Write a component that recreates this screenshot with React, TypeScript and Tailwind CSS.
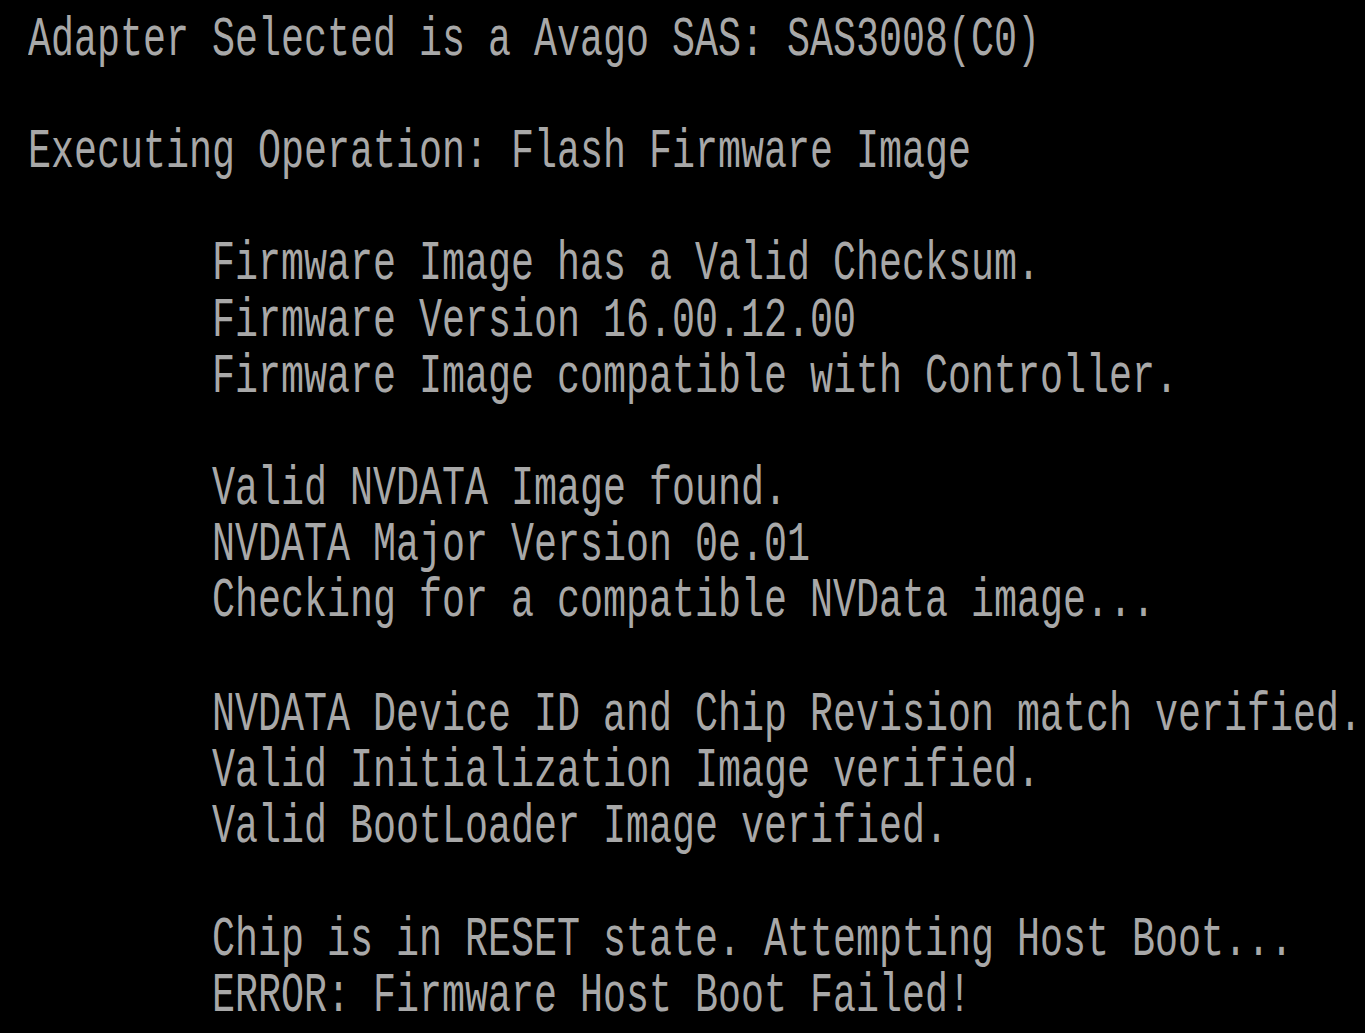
const lines: string[] = [
  'Adapter Selected is a Avago SAS: SAS3008(C0)',
  '',
  'Executing Operation: Flash Firmware Image',
  '',
  '        Firmware Image has a Valid Checksum.',
  '        Firmware Version 16.00.12.00',
  '        Firmware Image compatible with Controller.',
  '',
  '        Valid NVDATA Image found.',
  '        NVDATA Major Version 0e.01',
  '        Checking for a compatible NVData image...',
  '',
  '        NVDATA Device ID and Chip Revision match verified.',
  '        Valid Initialization Image verified.',
  '        Valid BootLoader Image verified.',
  '',
  '        Chip is in RESET state. Attempting Host Boot...',
  '        ERROR: Firmware Host Boot Failed!',
];

const App = () => {
  return (
    <div className="w-full h-[1033px] bg-black overflow-hidden">
      {/* Console output, stretched vertically like a VGA text mode */}
      <div className="pl-[28px] pt-[9px] origin-top-left scale-y-[1.44] font-['Liberation_Mono',monospace] text-[38.33px] leading-[39.06px] text-[#a8a8a8] whitespace-pre">
        {lines.map((line, i) => (
          <div key={i} className="h-[39.06px]">
            {line}
          </div>
        ))}
      </div>
    </div>
  );
};

export default App;
